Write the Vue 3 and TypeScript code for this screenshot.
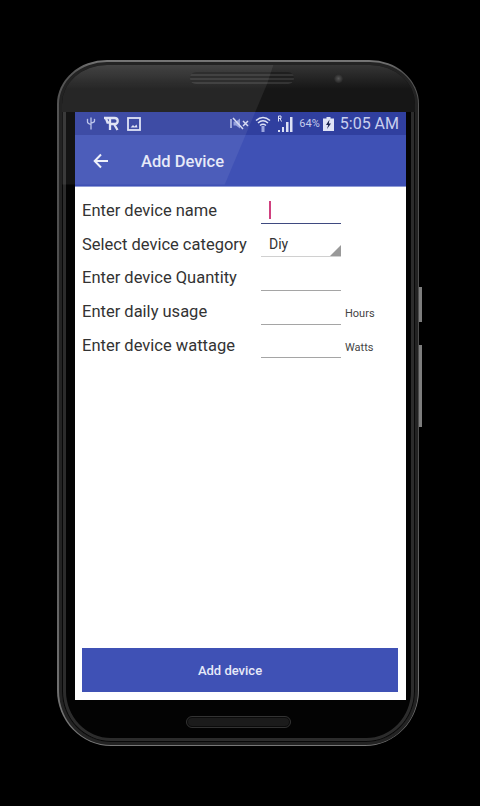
<script setup lang="ts">
interface Row { label: string; kind: 'focus' | 'select' | 'plain'; unit?: string }
const rows: Row[] = [
  { label: 'Enter device name', kind: 'focus' },
  { label: 'Select device category', kind: 'select' },
  { label: 'Enter device Quantity', kind: 'plain' },
  { label: 'Enter daily usage', kind: 'plain', unit: 'Hours' },
  { label: 'Enter device wattage', kind: 'plain', unit: 'Watts' },
]
</script>

<template>
  <div class="page">
    <div class="phone">
      <i class="key key-top"></i>
      <i class="key key-bottom"></i>
      <div class="bezel">
        <div class="top-bezel">
          <span class="speaker"></span>
          <span class="camera"></span>
        </div>
        <div class="screen">
          <div class="status">
            <div class="status-left">
              <svg width="10" height="13" viewBox="0 0 10 13"><path d="M5 .5v12M1.500 3v2q0 1.500 3.500 2.500M8.500 3v1q0 1.500-3.500 2" fill="none" stroke="#b9c2ea" stroke-width="1.300"/><path d="M.5 3h2L1.500 1.500zM7.500 3h2L8.500 1.500z" fill="#b9c2ea"/></svg>
              <svg width="17" height="15" viewBox="0 0 17 15"><path d="M1 2h10.500q3.200 0 3.200 3t-3.200 3H8M11 8l3.500 6M7 2v12M3 2.500l1.500 4H7" fill="none" stroke="#dde1f5" stroke-width="2.300"/></svg>
              <svg width="14" height="14" viewBox="0 0 14 14"><rect x="1" y="1" width="12" height="12" fill="none" stroke="#dde1f5" stroke-width="1.800"/><path d="M3.500 10.500 6 8l1.500 1.500 2-2 1 3z" fill="#dde1f5"/></svg>
            </div>
            <div class="status-right">
              <svg class="mute" width="20" height="13" viewBox="0 0 20 13"><path d="M1 2v9" stroke="#b9c2ea" stroke-width="1.500"/><path d="M3.500 4.500h2.500L10 1.500v10L6 8.500H3.500z" fill="#8f9bdb"/><path d="M3 1l10 11M13 4l5 5M18 4l-5 5" stroke="#d3d8f2" stroke-width="1.500" fill="none"/></svg>
              <svg class="wifi" width="16" height="18" viewBox="0 0 16 18"><path d="M1 5.500q7-6 14 0M3 8q5-4.500 10 0M5 10.500q3-2.500 6 0" fill="none" stroke="#dde1f5" stroke-width="1.500"/><path d="M8 11v6" stroke="#9ba6df" stroke-width="3"/></svg>
              <svg class="signal" width="16" height="18" viewBox="0 0 16 18"><path d="M1 15h2v2H1zM5 12h2v5H5zM9 7h2.500v10H9zM13 2h2.500v15H13z" fill="#dde1f5"/><path d="M1.500 6.500V1h2.500v2.500H1.500M3 3.500 4.500 6.500" fill="none" stroke="#dde1f5" stroke-width="1"/></svg>
              <span class="pct">64%</span>
              <svg class="battery" width="11" height="14" viewBox="0 0 11 14"><path d="M3.500 0h4v1.500H11V14H0V1.500h3.500z" fill="#dfe3f6"/><path d="M6.500 2.500 3 8h2.200L4 12l4-5.500H5.800z" fill="#1c2450"/></svg>
              <span class="time">5:05 AM</span>
            </div>
          </div>
          <header class="appbar">
            <svg class="back" width="16" height="16" viewBox="0 0 16 16"><path d="M15 8H2M8 1.500 1.700 8 8 14.500" fill="none" stroke="#eef0fa" stroke-width="2"/></svg>
            <h1>Add Device</h1>
          </header>
          <main class="content">
            <div class="form">
              <div v-for="row in rows" :key="row.label" class="row">
                <span class="label">{{ row.label }}</span>
                <div class="field" :class="row.kind">
                  <span v-if="row.kind === 'focus'" class="caret"></span>
                  <template v-if="row.kind === 'select'">
                    <span class="value">Diy</span>
                    <span class="arrow"></span>
                  </template>
                </div>
                <span v-if="row.unit" class="unit">{{ row.unit }}</span>
              </div>
            </div>
            <button class="submit" type="button">Add device</button>
          </main>
        </div>
        <div class="bottom-bezel"><span class="grille"></span></div>
        <div class="shine"></div>
      </div>
    </div>
  </div>
</template>

<style>
html, body { margin: 0; background: #000; }
</style>

<style scoped>
.page {
  width: 480px;
  height: 806px;
  background: #000;
  padding: 60px 0 0 57px;
  box-sizing: border-box;
  overflow: hidden;
  font-family: Roboto, "Liberation Sans", sans-serif;
}
.phone {
  position: relative;
  width: 362px;
  height: 686px;
  box-sizing: border-box;
  border-radius: 50px 50px 54px 54px / 44px 44px 56px 56px;
  background: linear-gradient(#777 0, #555 12px, #4a4a4a 50%, #777 100%);
  padding: 1.500px;
}
.key {
  position: absolute;
  right: -3px;
  width: 3px;
  background: #7d7d7d;
}
.key-top { top: 227px; height: 35px; }
.key-bottom { top: 285px; height: 82px; }
.bezel {
  position: relative;
  height: 100%;
  box-sizing: border-box;
  border-radius: 48px 48px 52px 52px / 42px 42px 54px 54px;
  background: #030303;
  border: 3px solid #232323;
  box-shadow: inset 0 0 0 1px #080808, inset 0 0 0 4px #2c2c2c;
  padding: 0 13.500px;
  display: flex;
  flex-direction: column;
  overflow: hidden;
}
.top-bezel {
  position: relative;
  height: 47.500px;
  flex: none;
  background: linear-gradient(#353535, #161616 24px);
  margin: 0 -13.500px;
}
.speaker {
  position: absolute;
  left: 128px;
  top: 7px;
  width: 104px;
  height: 12px;
  border-radius: 6px;
  background: repeating-linear-gradient(#1f1f1f 0 2px, #343434 2px 4px);
}
.camera {
  position: absolute;
  left: 272px;
  top: 9px;
  width: 9px;
  height: 9px;
  border-radius: 50%;
  background: radial-gradient(#555, #1a1a1a 90%);
}
.screen {
  position: relative;
  width: 331px;
  height: 588px;
  flex: none;
  display: flex;
  flex-direction: column;
  background: #fff;
  overflow: hidden;
}
.status {
  height: 23px;
  flex: none;
  background: #303f9f;
  display: flex;
  justify-content: space-between;
  align-items: center;
  padding: 0 7px 0 11px;
}
.status-left, .status-right { display: flex; align-items: center; }
.status-left { gap: 7px; }
.status-right { gap: 3px; }
.wifi { margin-left: 2px; }
.signal { margin-left: 3px; }
.pct { font-size: 11px; color: #c5cbec; margin-left: 3px; }
.time { font-size: 16px; color: #c9cfee; margin-left: 3px; }
.appbar {
  height: 52px;
  flex: none;
  background: #3f51b5;
  display: flex;
  align-items: center;
  padding: 1px 0 0 18px;
  border-bottom: 1px solid #8f9bd6;
  box-sizing: border-box;
}
.back { margin-right: 32px; }
.appbar h1 {
  margin: 0;
  font-size: 16.500px;
  font-weight: 500;
  color: #e6e9f8;
}
.content {
  flex: 1;
  min-height: 0;
  display: flex;
  flex-direction: column;
  justify-content: space-between;
  padding: 7px 8px 8px 7px;
}
.form { display: flex; flex-direction: column; }
.row {
  height: 33.600px;
  display: flex;
  align-items: center;
  position: relative;
}
.label {
  width: 179px;
  font-size: 16.500px;
  color: #333;
}
.field {
  width: 80px;
  height: 30px;
  box-sizing: border-box;
  border-bottom: 1px solid #a5a5a5;
  position: relative;
  margin-top: -4px;
}
.field.focus { border-bottom: 1.500px solid #3f4a80; }
.field.select { border-bottom-color: #d0d0d0; }
.caret {
  position: absolute;
  left: 8px;
  top: 7px;
  width: 1.500px;
  height: 18px;
  background: #d0417f;
}
.value {
  position: absolute;
  left: 8px;
  top: 9px;
  font-size: 14px;
  color: #333;
}
.arrow {
  position: absolute;
  right: 0;
  bottom: 0;
  width: 0;
  height: 0;
  border-left: 11px solid transparent;
  border-bottom: 11px solid #999;
}
.unit {
  margin-left: 4px;
  margin-top: 4px;
  font-size: 11px;
  color: #444;
}
.submit {
  height: 44px;
  flex: none;
  border: 0;
  background: #3f51b5;
  color: #e6e9f8;
  font: 500 13px Roboto, "Liberation Sans", sans-serif;
  padding: 0 20px 0 0;
}
.shine {
  position: absolute;
  left: 0;
  top: 0;
  width: 212px;
  height: 120px;
  clip-path: polygon(0 0, 100% 0, 97% 16%, 77% 100%, 0 100%);
  background: rgba(255, 255, 255, 0.070);
  pointer-events: none;
}
.bottom-bezel {
  flex: 1;
  display: flex;
  justify-content: center;
  align-items: flex-start;
  padding-top: 16px;
}
.grille {
  width: 105px;
  height: 12px;
  box-sizing: border-box;
  border-radius: 6px;
  background: #1b1b1b;
  border: 2px solid #0b0b0b;
  outline: 1px solid #333;
  outline-offset: -1px;
}
</style>
